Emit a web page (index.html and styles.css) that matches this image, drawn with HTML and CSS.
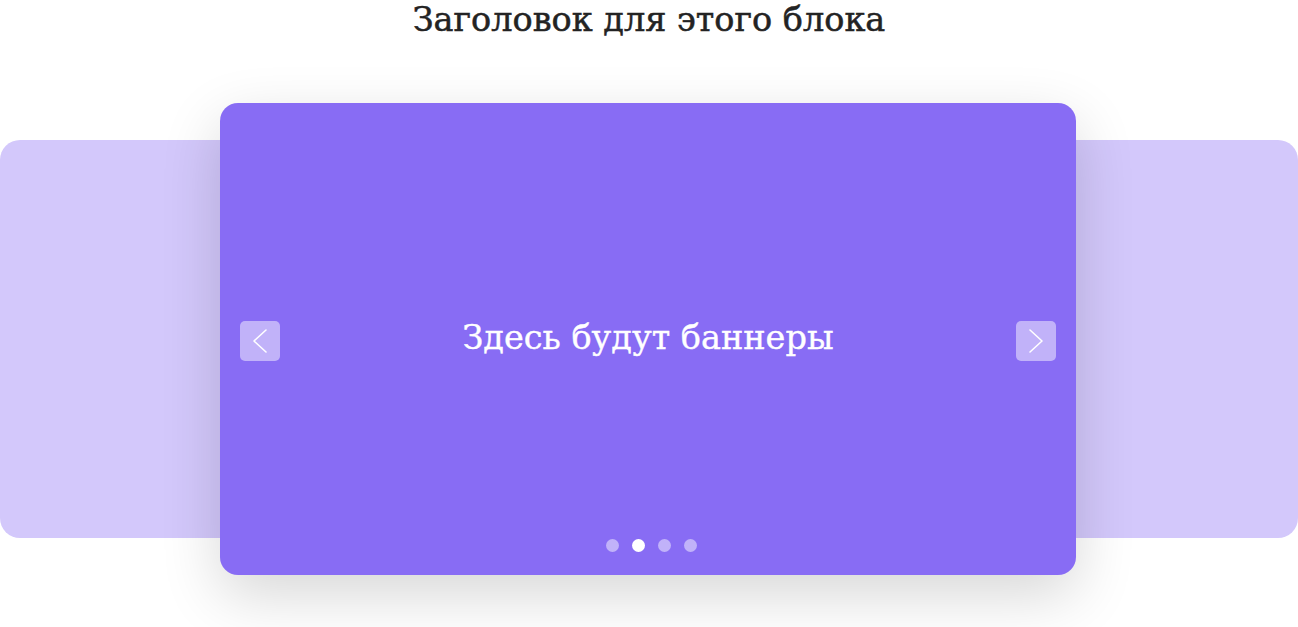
FILE: index.html
```html
<!DOCTYPE html>
<html lang="ru">
<head>
<meta charset="utf-8">
<link rel="stylesheet" href="styles.css">
</head>
<body>
<section class="block">
  <h1 class="block-title">Заголовок для этого блока</h1>
  <div class="stage">
    <div class="strip"></div>
    <div class="card">
      <div class="card-main">
        <button class="nav" aria-label="Назад">
          <svg width="40" height="40" viewBox="0 0 40 40"><path d="M26 9 L14 20 L26 31" fill="none" stroke="#fff" stroke-width="1.6" stroke-linecap="round" stroke-linejoin="round"/></svg>
        </button>
        <div class="card-text">Здесь будут баннеры</div>
        <button class="nav" aria-label="Вперёд">
          <svg width="40" height="40" viewBox="0 0 40 40"><path d="M14 9 L26 20 L14 31" fill="none" stroke="#fff" stroke-width="1.6" stroke-linecap="round" stroke-linejoin="round"/></svg>
        </button>
      </div>
      <div class="dots">
        <span class="dot"></span>
        <span class="dot active"></span>
        <span class="dot"></span>
        <span class="dot"></span>
      </div>
    </div>
  </div>
</section>
</body>
</html>
```
FILE: styles.css
```css
html, body {
  margin: 0;
  padding: 0;
  background: #fff;
}
body {
  font-family: "DejaVu Serif", "Liberation Serif", serif;
}
.block {
  display: flex;
  flex-direction: column;
  align-items: stretch;
  padding-bottom: 80px;
}
.block-title {
  margin: 0;
  text-align: center;
  font-size: 33.5px;
  line-height: 40px;
  font-weight: 400;
  color: #232323;
  -webkit-text-stroke: 0.5px #232323;
}
.stage {
  display: grid;
  margin-top: 63px;
}
.strip {
  grid-area: 1 / 1;
  margin-top: 37px;
  height: 398px;
  background: #d3c8fb;
  border-radius: 20px;
}
.card {
  grid-area: 1 / 1;
  justify-self: start;
  margin-left: 220px;
  width: 856px;
  height: 472px;
  background: #886cf4;
  border-radius: 18px;
  box-shadow: 0 20px 60px rgba(0, 0, 0, 0.16);
  display: grid;
  grid-template-rows: 1fr auto;
}
.card-main {
  display: flex;
  align-items: center;
  justify-content: space-between;
  padding: 39px 20px 0;
}
.nav {
  width: 40px;
  height: 40px;
  padding: 0;
  border: 0;
  border-radius: 5px;
  background: rgba(255, 255, 255, 0.48);
  display: flex;
  align-items: center;
  justify-content: center;
}
.nav svg { display: block; }
.card-text {
  color: #fff;
  font-size: 33.5px;
  line-height: 40px;
  padding-bottom: 5px;
  -webkit-text-stroke: 0.4px #fff;
}
.dots {
  display: flex;
  justify-content: center;
  gap: 13px;
  padding: 0 0 23px 6px;
}
.dot {
  width: 13px;
  height: 13px;
  border-radius: 50%;
  background: rgba(255, 255, 255, 0.48);
}
.dot.active { background: #fff; }
```
